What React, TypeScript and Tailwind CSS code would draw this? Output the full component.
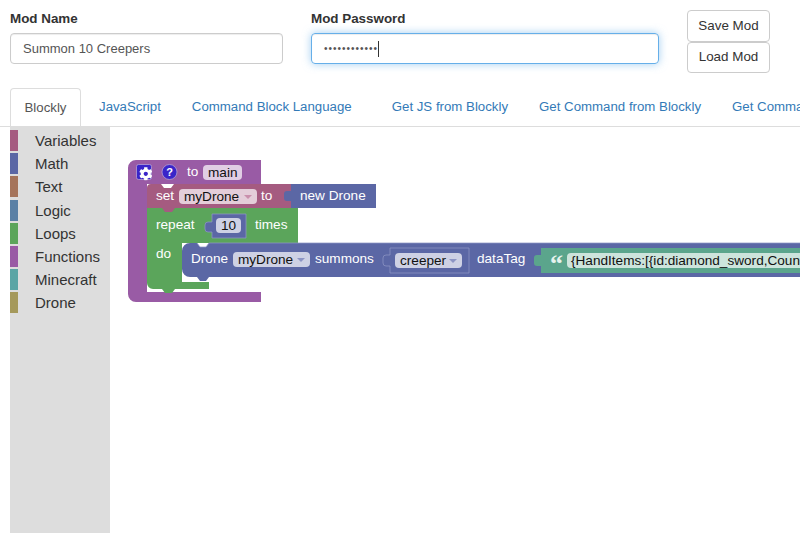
import { FaCog } from 'react-icons/fa';

const categories = [
  { name: 'Variables', color: 'bg-[#a55b80]' },
  { name: 'Math', color: 'bg-[#5b67a5]' },
  { name: 'Text', color: 'bg-[#a5745b]' },
  { name: 'Logic', color: 'bg-[#5b80a5]' },
  { name: 'Loops', color: 'bg-[#5ba55b]' },
  { name: 'Functions', color: 'bg-[#995ba5]' },
  { name: 'Minecraft', color: 'bg-[#5ba5a5]' },
  { name: 'Drone', color: 'bg-[#a5995b]' },
];

const tabs = [
  { label: 'JavaScript', margin: 'ml-[3px]' },
  { label: 'Command Block Language', margin: 'ml-px' },
  { label: 'Get JS from Blockly', margin: 'ml-[10px]' },
  { label: 'Get Command from Blockly', margin: 'ml-px' },
  { label: 'Get Command Block Language', margin: 'ml-px' },
];

function Field({ x, y, w, label, fill, arrow }: { x: number; y: number; w: number; label: string; fill: string; arrow?: string }) {
  return (
    <g>
      <rect x={x} y={y} width={w} height={15} rx={4} fill={fill} />
      <text x={x + 5} y={y + 12} fill="#111">{label}</text>
      {arrow && <path d={`M${x + w - 13} ${y + 6}h8l-4 4z`} fill={arrow} />}
    </g>
  );
}

function Blocks() {
  return (
    <svg
      width={690}
      height={406}
      viewBox="110 127 690 406"
      className="block text-[13.6px] font-['Liberation_Sans',sans-serif]"
    >
      {/* function block */}
      <path d="M136 160H261V184H147V292H261V302H136a8 8 0 0 1-8-8V168a8 8 0 0 1 8-8z" fill="#995ba5" />
      <rect x={136.5} y={164.5} width={15} height={15} rx={2} fill="#3a25c9" stroke="#b9a6d6" strokeWidth={0.75} />
      <FaCog x={139} y={167} width={10} height={10} color="#fff" />
      <circle cx={169.5} cy={172} r={7.5} fill="#3a25c9" stroke="#b9a6d6" strokeWidth={0.75} />
      <text x={169.5} y={176} textAnchor="middle" fill="#fff" className="text-[11px] font-bold">?</text>
      <text x={187} y={176} fill="#fff">to</text>
      <Field x={203} y={165} w={39} label="main" fill="#e0cde4" />

      {/* repeat block */}
      <path d="M147 208H298V243H182V282H209V289H175l-3 4h-7l-3-4h-9a6 6 0 0 1-6-6z" fill="#5ba55b" />
      <text x={156} y={229} fill="#fff">repeat</text>
      <text x={255} y={229} fill="#fff">times</text>
      <text x={156} y={258} fill="#fff">do</text>
      <path d="M212 214H246V238H212V232h-4a3 3 0 0 1-3-3V225a3 3 0 0 1 3-3h4z" fill="#5b67a5" stroke="#8d95c4" strokeWidth={0.75} />
      <Field x={216} y={218} w={25} label="10" fill="#ced1e4" />

      {/* set block */}
      <path d="M151 184H161l3 4h7l3-4H291V208H175l-3 4h-7l-3-4H147V188a4 4 0 0 1 4-4z" fill="#a55b80" />
      <text x={156} y={200} fill="#fff">set</text>
      <Field x={179} y={189} w={78} label="myDrone" fill="#e4cdd9" arrow="#c98fac" />
      <text x={261} y={200} fill="#fff">to</text>
      <path d="M291 184H376V208H291V201h-4a3 3 0 0 1-3-3V194a3 3 0 0 1 3-3h4z" fill="#5b67a5" />
      <text x={300} y={200} fill="#fff">new Drone</text>

      {/* drone block */}
      <path d="M190 243H197l3 4h6l3-4H800V277H209l-3 4h-6l-3-4H190a8 8 0 0 1-8-8V251a8 8 0 0 1 8-8z" fill="#5b67a5" />
      <path d="M800 243H209l-3 4h-6l-3-4" fill="none" stroke="#8d95c4" strokeWidth={0.75} />
      <text x={191} y={263} fill="#fff">Drone</text>
      <Field x={233} y={252} w={77} label="myDrone" fill="#ced1e4" arrow="#8d95c4" />
      <text x={315} y={263} fill="#fff">summons</text>
      <path d="M390 248H469V273H390V266h-4a3 3 0 0 1-3-3V258a3 3 0 0 1 3-3h4z" fill="#5b67a5" stroke="#8d95c4" strokeWidth={0.75} />
      <Field x={395} y={253} w={67} label="creeper" fill="#ced1e4" arrow="#8d95c4" />
      <text x={477} y={263} fill="#fff">dataTag</text>

      {/* text block */}
      <path d="M541 248H800V273H541V266h-4a3 3 0 0 1-3-3V258a3 3 0 0 1 3-3h4z" fill="#5ba58c" />
      <text x={550} y={272} fill="#e6f3ee" className="text-[26px] font-bold font-['Liberation_Serif',serif]">“</text>
      <rect x={567} y={253} width={240} height={15} rx={4} fill="#cde4dc" />
      <text x={571} y={265} fill="#111">{'{HandItems:[{id:diamond_sword,Count:1}]}'}</text>
    </svg>
  );
}

export default function App() {
  return (
    <div className="w-[800px] h-[533px] overflow-hidden bg-white font-['Liberation_Sans',sans-serif] text-[13.4px] text-[#333]">
      <div className="flex pl-[10px] pt-[10px] h-[88px]">
        <div className="w-[273px]">
          <label className="block font-bold leading-[18px] mb-[5px]">Mod Name</label>
          <input
            readOnly
            value="Summon 10 Creepers"
            className="w-full h-[31px] px-[12px] border border-[#ccc] rounded-[4px] text-[13px] text-[#555] shadow-[inset_0_1px_1px_rgba(0,0,0,0.075)] outline-none"
          />
        </div>
        <div className="w-[348px] ml-[28px]">
          <label className="block font-bold leading-[18px] mb-[5px]">Mod Password</label>
          <div className="flex items-center w-full h-[31px] px-[12px] border border-[#66afe9] rounded-[4px] shadow-[inset_0_1px_1px_rgba(0,0,0,0.075),0_0_8px_rgba(102,175,233,0.6)]">
            <span className="text-[#555] text-[10px] tracking-[1px]">••••••••••••</span>
            <span className="w-px h-[16px] bg-[#333]" />
          </div>
        </div>
        <div className="w-[83px] ml-[28px] flex flex-col">
          <button className="h-[32px] border border-[#ccc] rounded-[4px] bg-white">Save Mod</button>
          <button className="h-[31px] border border-[#ccc] rounded-[4px] bg-white">Load Mod</button>
        </div>
      </div>

      <div className="flex h-[39px] pl-[10px] border-b border-[#ddd] whitespace-nowrap overflow-hidden text-[13.25px]">
        <div className="h-[39px] w-[71px] shrink-0 text-center leading-[38px] border border-[#ddd] border-b-white rounded-t-[4px] bg-white text-[#555]">
          Blockly
        </div>
        {tabs.map((t) => (
          <a key={t.label} className={`${t.margin} px-[15px] leading-[38px] text-[#337ab7]`}>
            {t.label}
          </a>
        ))}
      </div>

      <div className="flex h-[406px] pl-[10px]">
        <div className="w-[100px] bg-[#ddd] pt-[3px] text-[15px] text-[#333]">
          {categories.map((c) => (
            <div key={c.name} className="flex h-[23.2px]">
              <div className={`w-[8px] h-[21px] ${c.color}`} />
              <span className="ml-[17px] leading-[21px]">{c.name}</span>
            </div>
          ))}
        </div>
        <div className="flex-1">
          <Blocks />
        </div>
      </div>
    </div>
  );
}
